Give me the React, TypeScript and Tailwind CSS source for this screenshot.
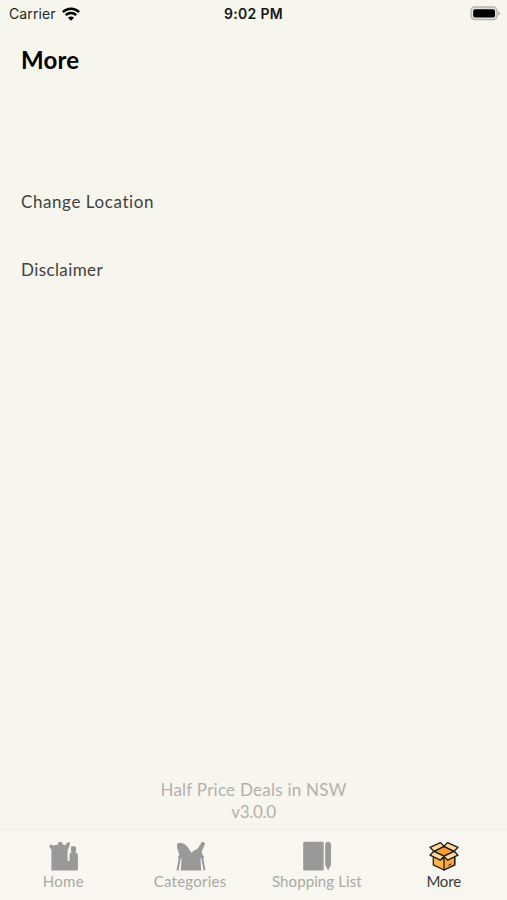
import React from 'react';
import clsx from 'clsx';

interface TabItem {
  label: string;
  icon: React.ReactNode;
  labelClass: string;
  active?: boolean;
}

const WifiIcon: React.FC = () => (
  <svg className="w-[18px] h-[14px]" viewBox="0 0 18 14" fill="none" stroke="#000" strokeWidth="2.5">
    <path d="M0.9 5.1C5.5 0.7 12.5 0.7 17.1 5.1" />
    <path d="M3.8 8.1C6.8 5.3 11.2 5.3 14.2 8.1" />
    <path d="M9 13.8L6 10.7C7.7 9.2 10.3 9.2 12 10.7Z" fill="#000" stroke="none" />
  </svg>
);

const BatteryIcon: React.FC = () => (
  <svg className="w-[31px] h-[15px]" viewBox="0 0 31 15">
    <rect x="1" y="1" width="26" height="12.6" rx="3.8" fill="#e4e3de" stroke="#b3b2ad" strokeWidth="1.3" />
    <rect x="3.2" y="3.2" width="21.8" height="8.3" rx="1.8" fill="#000" />
    <path d="M28.3 5.2C30.5 6 30.5 8.6 28.3 9.4Z" fill="#a5a4a0" />
  </svg>
);

const GroceriesIcon: React.FC = () => (
  <svg className="ml-[2px] w-[30px] h-[30px]" viewBox="0 0 30 30" fill="#999">
    <path d="M2.4 29.4V8.6L0.4 6.2L1.2 3.2L4.4 4.4C6 3.8 7.5 3.9 8.6 3.9C8.7 2.2 9.8 0.8 11.4 0.8C13 0.8 13.8 2.2 13.8 3.8L16.4 4.2C17 2.2 18.8 0.9 21 1.3C20.6 2.5 21.2 3.8 20.3 5.2L18.6 9.2V20H20.5V14.2C20.5 12.9 21.4 12 22.4 11.3V10.2H21.9V6.6C21.9 4.9 27.1 4.9 27.1 6.6V10.2H26.6V11.3C27.7 12 28.9 12.9 28.9 14.2V28.2Q28.9 29.4 27.6 29.4Z" />
  </svg>
);

const BasketIcon: React.FC = () => (
  <svg className="ml-[1px] w-[30px] h-[30px]" viewBox="0 0 30 30" fill="#999">
    <path d="M1.2 2.4C5.2.4 10.8 3.7 13 8.2L15.6 11.8C17.3 9.8 19.3 8.6 21.2 8.3L25 2.2C25.6 .4 28.2 .7 28.8 2.1C29.3 3.5 28.4 4.3 27.9 5.5L25.8 10.2C26.2 12 26.2 13.5 26.8 14.3L28.2 15.2L27.4 17.5H2.6L1.9 15.3L3.6 13.8C1.6 9.6 .5 5.5 1.2 2.4Z" />
    <path d="M5.6 16H24.4L25.2 29.4H4.8Z" />
    <path d="M3.8 17L1.5 29.3M26.2 17L28.5 29.3" stroke="#999" strokeWidth="2" />
  </svg>
);

const NotepadIcon: React.FC = () => (
  <svg className="w-[30px] h-[30px]" viewBox="0 0 30 30" fill="#999">
    <rect x="1.2" y="0.8" width="20.5" height="28.6" rx="1.2" />
    <path d="M23.2 3.4C23.2 0 29 0 29 3.4V24L26.1 29.3L23.2 24Z" />
    <path d="M20.7 1V29" stroke="#a8a7a4" strokeWidth="0.6" />
  </svg>
);

const BoxIcon: React.FC = () => (
  <svg className="w-[30px] h-[30px]" viewBox="0 0 30 30" stroke="#211d18" strokeWidth="1.3" strokeLinejoin="round">
    <path d="M4.3 15V23.9L15 29L25.7 23.9V15L15 18Z" fill="#fcb34c" />
    <path d="M15 15V29L25.7 23.9V14Z" fill="#f9a63c" />
    <path d="M15 5.3L25.2 10.3L15 15.2L4.8 10.3Z" fill="#f99d2b" />
    <path d="M15 5.3L11.5 1.6L1 6.3L4.8 10.3Z" fill="#fedb9d" />
    <path d="M15 5.3L18.5 1.6L29 6.3L25.2 10.3Z" fill="#fedb9d" />
    <path d="M4.8 10.3L1 14.2L11.3 19.2L15 15.2Z" fill="#fedb9d" />
    <path d="M25.2 10.3L29 14.2L18.7 19.2L15 15.2Z" fill="#fedb9d" />
    <path d="M19.5 24.3L22.2 23" fill="none" strokeWidth="1" />
  </svg>
);

const tabs: TabItem[] = [
  { label: 'Home', icon: <GroceriesIcon />, labelClass: 'tracking-[0.3px]' },
  { label: 'Categories', icon: <BasketIcon />, labelClass: 'tracking-[0.25px]' },
  { label: 'Shopping List', icon: <NotepadIcon />, labelClass: 'tracking-[0.1px]' },
  { label: 'More', icon: <BoxIcon />, labelClass: 'tracking-[-0.2px]', active: true },
];

const StatusBar: React.FC = () => (
  <div className="grid h-7 grid-cols-3 items-center pl-[9px] pr-[6px] font-['Inter','Liberation_Sans',sans-serif] text-[14px] text-[#252522]">
    <div className="flex items-center gap-[6px] pb-[1px]">
      <span className="pb-[1px] tracking-[0.1px]">Carrier</span>
      <WifiIcon />
    </div>
    <div className="pb-[1px] pr-[3px] text-center font-semibold tracking-[0.3px] text-[#151513]">9:02 PM</div>
    <div className="flex justify-end pb-[2px]">
      <BatteryIcon />
    </div>
  </div>
);

const TabBar: React.FC = () => (
  <nav className="grid h-[72px] grid-cols-4 border-t-2 border-[#f3f2ec] bg-[#f7f6f0]">
    {tabs.map(({ label, icon, labelClass, active }) => (
      <button key={label} className="flex flex-col items-center pt-[11px]">
        {icon}
        <span
          className={clsx(
            'whitespace-nowrap text-[15px] leading-[20px]',
            labelClass,
            active ? 'text-[#3b3a36]' : 'text-[#aaa9a4]'
          )}
        >
          {label}
        </span>
      </button>
    ))}
  </nav>
);

const App: React.FC = () => {
  return (
    <div className="flex h-[900px] w-[507px] flex-col overflow-hidden bg-[#f6f5ee] font-['Lato','Open_Sans',sans-serif]">
      <StatusBar />

      <main className="flex flex-1 flex-col">
        <h1 className="mt-4 pl-[21px] text-[24px] font-bold leading-8 tracking-[0.2px] text-black">More</h1>

        {/* Options */}
        <ul className="mt-[92px] pl-[21px] text-[17px] text-[#42413d]">
          <li className="flex h-[68px] items-center tracking-[0.58px]">Change Location</li>
          <li className="flex h-[68px] items-center tracking-[0.4px]">Disclaimer</li>
        </ul>

        {/* App name and version */}
        <footer className="mb-[5px] mt-auto text-center text-[17px] leading-[22px] text-[#b2b1ac]">
          <p className="tracking-[0.25px]">Half Price Deals in NSW</p>
          <p className="tracking-[-0.3px]">v3.0.0</p>
        </footer>
      </main>

      <TabBar />
    </div>
  );
};

export default App;
